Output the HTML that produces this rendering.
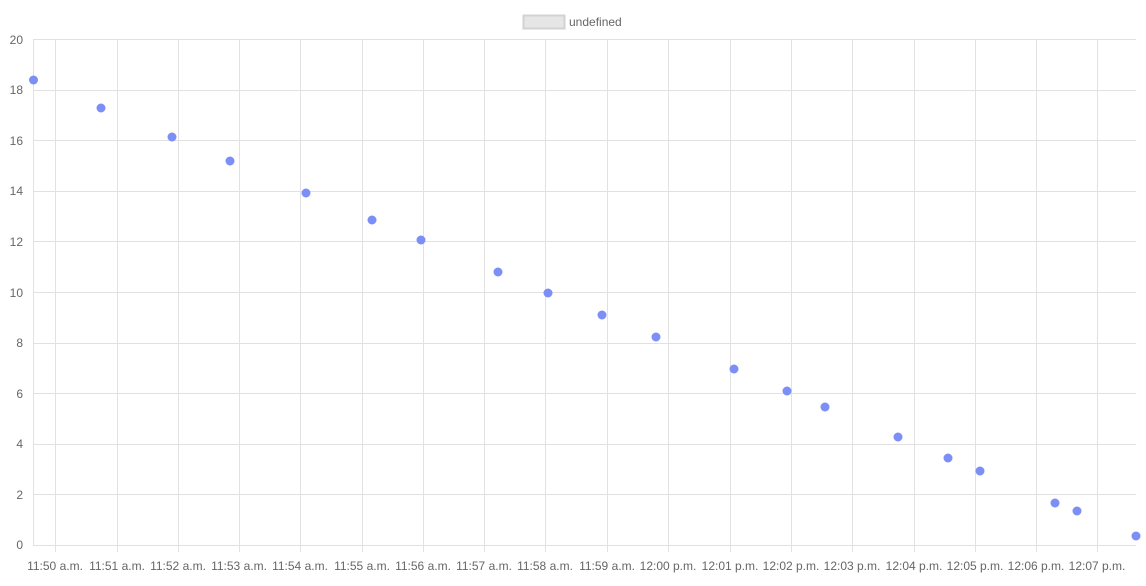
<!DOCTYPE html>
<html><head><meta charset="utf-8"><style>
html,body{margin:0;padding:0;background:#fff;}
svg{display:block;}
text{font-family:"Liberation Sans",Arial,sans-serif;font-size:12px;fill:#666;}
</style></head><body>
<svg width="1146" height="586" viewBox="0 0 1146 586">
<rect x="523.5" y="15.5" width="41" height="13" fill="#e6e6e6" stroke="#d2d2d2" stroke-width="2"/>
<text x="569" y="26">undefined</text>
<g stroke="#e1e1e1" stroke-width="1">
<line x1="33" y1="39.5" x2="1136" y2="39.5"/>
<line x1="33" y1="90.5" x2="1136" y2="90.5"/>
<line x1="33" y1="140.5" x2="1136" y2="140.5"/>
<line x1="33" y1="191.5" x2="1136" y2="191.5"/>
<line x1="33" y1="241.5" x2="1136" y2="241.5"/>
<line x1="33" y1="292.5" x2="1136" y2="292.5"/>
<line x1="33" y1="343.5" x2="1136" y2="343.5"/>
<line x1="33" y1="393.5" x2="1136" y2="393.5"/>
<line x1="33" y1="444.5" x2="1136" y2="444.5"/>
<line x1="33" y1="494.5" x2="1136" y2="494.5"/>
<line x1="33" y1="545.5" x2="1136" y2="545.5"/>
<line x1="33.5" y1="39" x2="33.5" y2="545"/>
<line x1="55.5" y1="39" x2="55.5" y2="552"/>
<line x1="117.5" y1="39" x2="117.5" y2="552"/>
<line x1="178.5" y1="39" x2="178.5" y2="552"/>
<line x1="239.5" y1="39" x2="239.5" y2="552"/>
<line x1="300.5" y1="39" x2="300.5" y2="552"/>
<line x1="362.5" y1="39" x2="362.5" y2="552"/>
<line x1="423.5" y1="39" x2="423.5" y2="552"/>
<line x1="484.5" y1="39" x2="484.5" y2="552"/>
<line x1="545.5" y1="39" x2="545.5" y2="552"/>
<line x1="607.5" y1="39" x2="607.5" y2="552"/>
<line x1="668.5" y1="39" x2="668.5" y2="552"/>
<line x1="730.5" y1="39" x2="730.5" y2="552"/>
<line x1="791.5" y1="39" x2="791.5" y2="552"/>
<line x1="852.5" y1="39" x2="852.5" y2="552"/>
<line x1="914.5" y1="39" x2="914.5" y2="552"/>
<line x1="975.5" y1="39" x2="975.5" y2="552"/>
<line x1="1036.5" y1="39" x2="1036.5" y2="552"/>
<line x1="1097.5" y1="39" x2="1097.5" y2="552"/>
</g>
<g text-anchor="end">
<text x="23" y="44">20</text><text x="23" y="94">18</text><text x="23" y="145">16</text>
<text x="23" y="195">14</text><text x="23" y="246">12</text><text x="23" y="297">10</text>
<text x="23" y="347">8</text><text x="23" y="398">6</text><text x="23" y="448">4</text>
<text x="23" y="499">2</text><text x="23" y="549">0</text>
</g>
<g text-anchor="middle">
<text x="55" y="570">11:50 a.m.</text><text x="117" y="570">11:51 a.m.</text><text x="178" y="570">11:52 a.m.</text>
<text x="239" y="570">11:53 a.m.</text><text x="300" y="570">11:54 a.m.</text><text x="362" y="570">11:55 a.m.</text>
<text x="423" y="570">11:56 a.m.</text><text x="484" y="570">11:57 a.m.</text><text x="545" y="570">11:58 a.m.</text>
<text x="607" y="570">11:59 a.m.</text><text x="668" y="570">12:00 p.m.</text><text x="730" y="570">12:01 p.m.</text>
<text x="791" y="570">12:02 p.m.</text><text x="852" y="570">12:03 p.m.</text><text x="914" y="570">12:04 p.m.</text>
<text x="975" y="570">12:05 p.m.</text><text x="1036" y="570">12:06 p.m.</text><text x="1097" y="570">12:07 p.m.</text>
</g>
<g fill="#7b8ff6">
<circle cx="33.5" cy="80" r="4.5"/><circle cx="101" cy="108" r="4.5"/><circle cx="172" cy="137" r="4.5"/>
<circle cx="230" cy="161" r="4.5"/><circle cx="306" cy="193" r="4.5"/><circle cx="372" cy="220" r="4.5"/>
<circle cx="421" cy="240" r="4.5"/><circle cx="498" cy="272" r="4.5"/><circle cx="548" cy="293" r="4.5"/>
<circle cx="602" cy="315" r="4.5"/><circle cx="656" cy="337" r="4.5"/><circle cx="734" cy="369" r="4.5"/>
<circle cx="787" cy="391" r="4.5"/><circle cx="825" cy="407" r="4.5"/><circle cx="898" cy="437" r="4.5"/>
<circle cx="948" cy="458" r="4.5"/><circle cx="980" cy="471" r="4.5"/><circle cx="1055" cy="503" r="4.5"/>
<circle cx="1077" cy="511" r="4.5"/><circle cx="1136" cy="536" r="4.5"/>
</g>
</svg>
</body></html>
